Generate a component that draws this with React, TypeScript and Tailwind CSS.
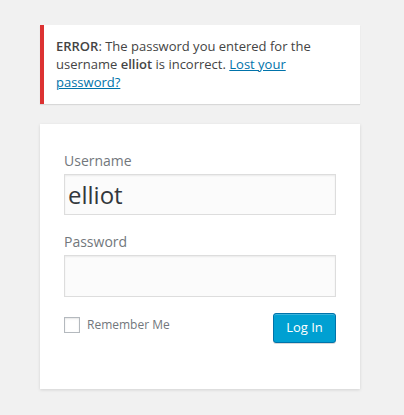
export default function App() {
  return (
    <main
      className="min-h-[415px] w-full bg-[#f1f1f1] pt-[25px]"
      style={{ fontFamily: '"Open Sans", "Liberation Sans", sans-serif' }}
    >
      <div className="ml-[40px] w-[320px]">
        <div className="mb-[20px] border-l-4 border-[#dc3232] bg-white p-[12px] text-[13px] leading-[1.4] text-[#444] shadow-[0_1px_1px_0_rgba(0,0,0,0.1)]">
          <p>
            <strong className="font-semibold">ERROR</strong>: The password you entered for the username{" "}
            <strong className="font-semibold">elliot</strong> is incorrect.{" "}
            <a href="#" className="text-[#0073aa] underline">
              Lost your password?
            </a>
          </p>
        </div>

        <form className="bg-white px-[24px] pt-[26px] pb-[46px] shadow-[0_1px_3px_rgba(0,0,0,0.13)]">
          <label className="block text-[14px] leading-[1.5] text-[#72777c]">Username</label>
          <input
            type="text"
            defaultValue="elliot"
            className="mt-[3px] mb-[16px] block h-[41px] w-full border border-[#ddd] bg-[#fbfbfb] px-[3px] text-[24px] text-[#32373c] shadow-[inset_0_1px_2px_rgba(0,0,0,0.07)] outline-none"
          />
          <label className="block text-[14px] leading-[1.5] text-[#72777c]">Password</label>
          <input
            type="password"
            className="mt-[3px] mb-[16px] block h-[42px] w-full border border-[#ddd] bg-[#fbfbfb] px-[3px] text-[24px] text-[#32373c] shadow-[inset_0_1px_2px_rgba(0,0,0,0.07)] outline-none"
          />
          <div className="flex items-start justify-between">
            <label className="mt-[3px] flex items-center gap-[7px] text-[12px] text-[#72777c]">
              <span className="block h-[16px] w-[16px] border border-[#b4b9be] bg-white shadow-[inset_0_1px_2px_rgba(0,0,0,0.1)]" />
              Remember Me
            </label>
            <button
              type="button"
              className="h-[30px] w-[63px] rounded-[3px] border border-[#0073aa] bg-[#00a0d2] pb-[2px] text-[13px] leading-[26px] text-white shadow-[inset_0_1px_0_rgba(120,200,230,0.5),0_1px_0_rgba(0,0,0,0.15)]"
            >
              Log In
            </button>
          </div>
        </form>
      </div>
    </main>
  );
}
